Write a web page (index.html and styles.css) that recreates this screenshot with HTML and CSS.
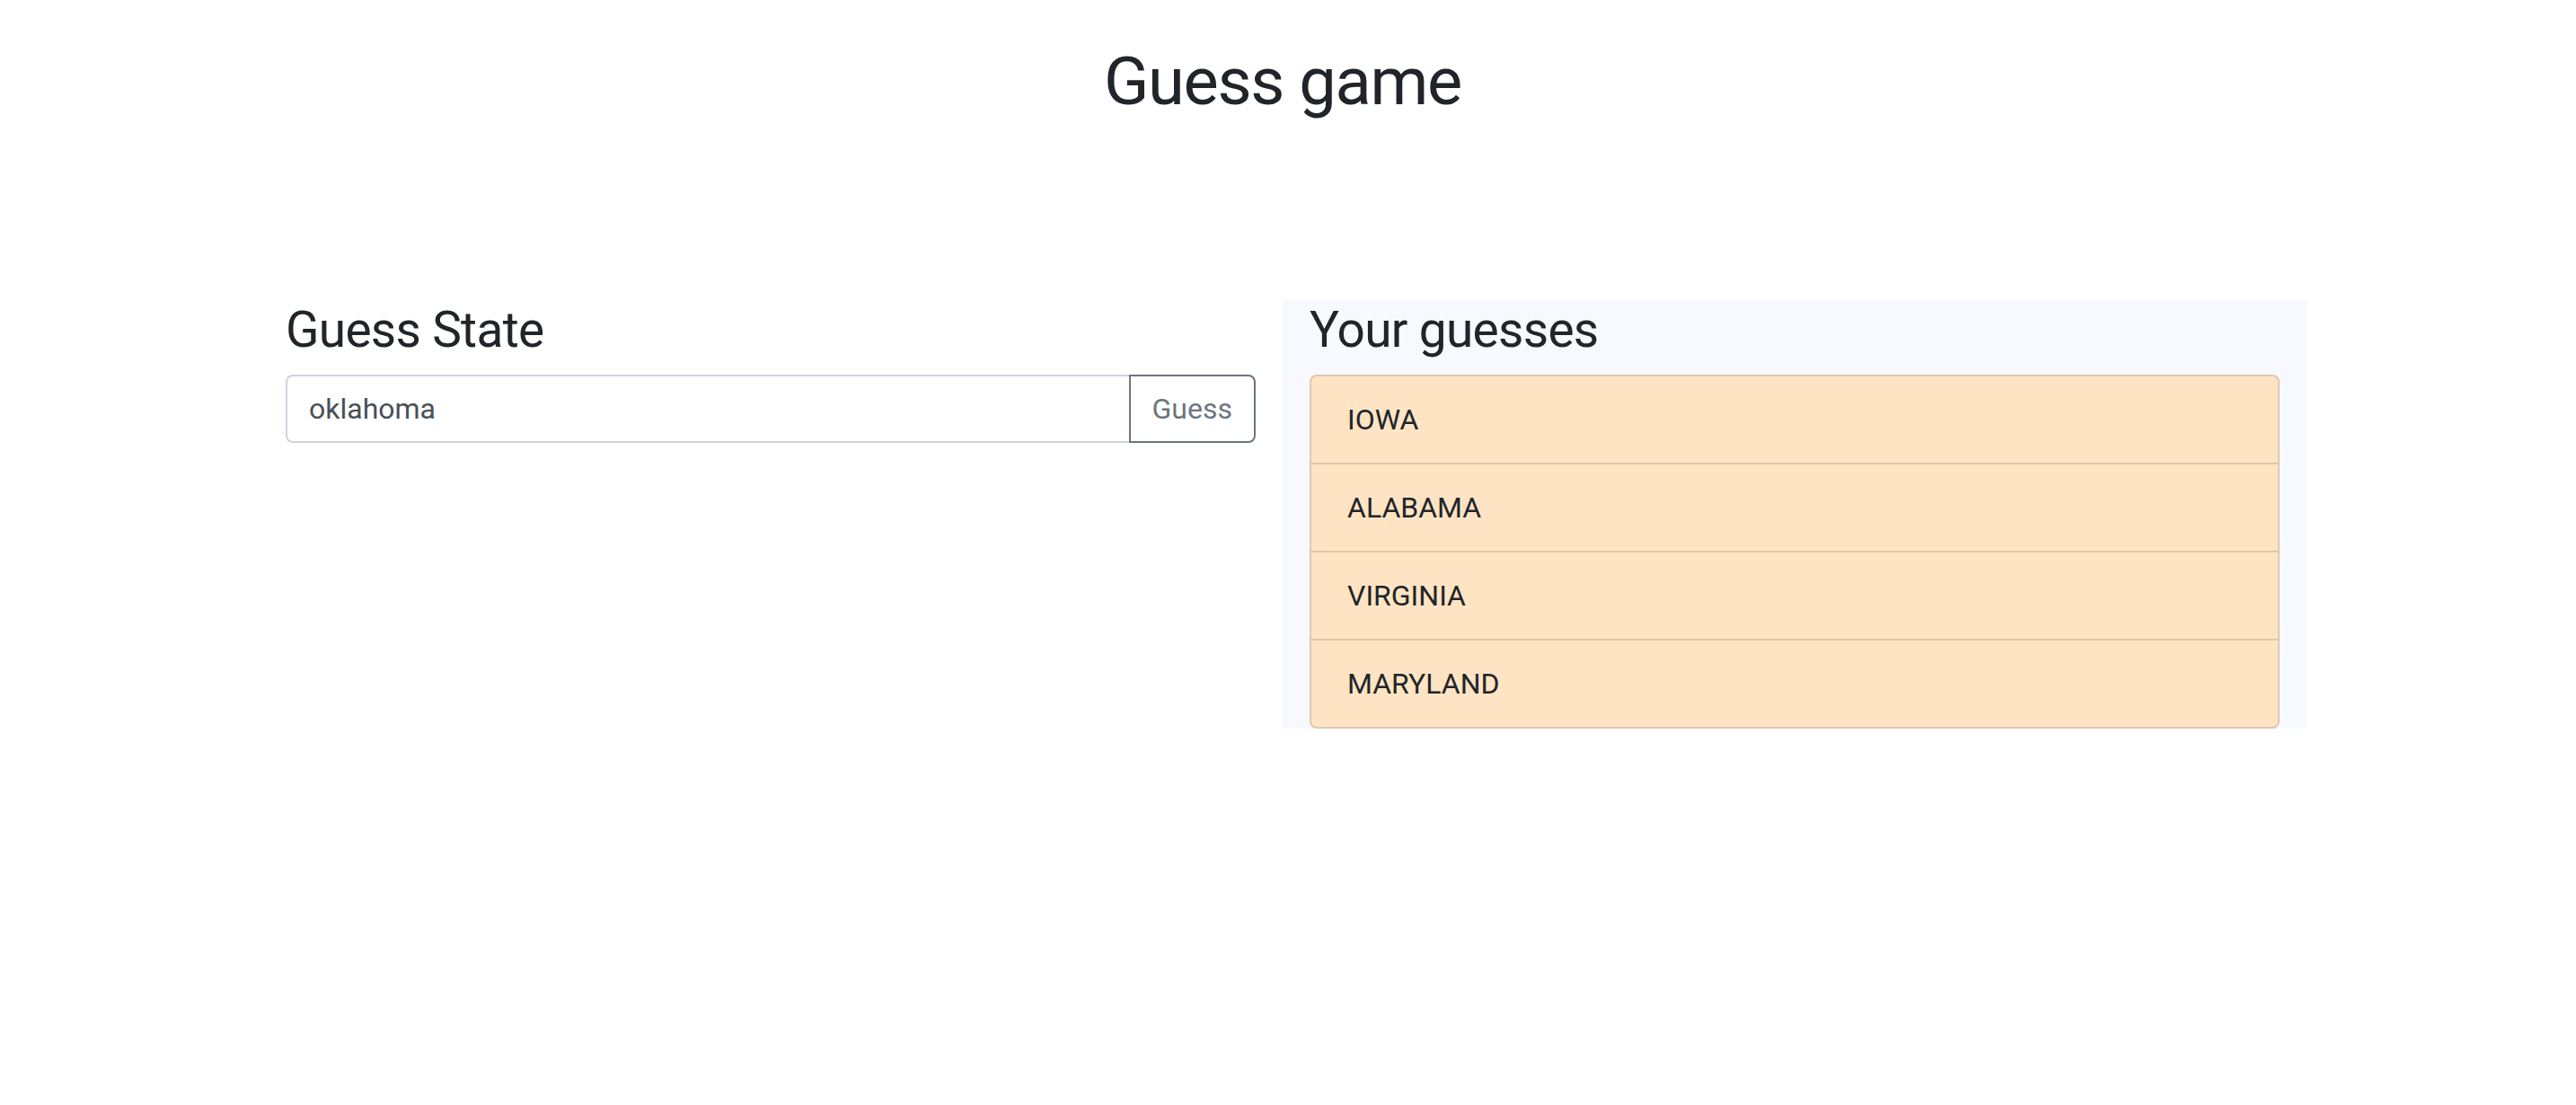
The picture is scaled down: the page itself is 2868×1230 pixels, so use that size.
FILE: index.html
```html
<!DOCTYPE html>
<html lang="en">
<head>
<meta charset="utf-8">
<title>Guess game</title>
<link rel="stylesheet" href="styles.css">
</head>
<body>
<div class="page">
  <h1 class="title">Guess game</h1>
  <div class="row">
    <section class="col">
      <h3 class="heading">Guess State</h3>
      <form class="input-group">
        <input class="field" type="text" value="oklahoma">
        <button class="btn" type="button">Guess</button>
      </form>
    </section>
    <section class="col col-panel">
      <h3 class="heading">Your guesses</h3>
      <ul class="list">
        <li class="item">IOWA</li>
        <li class="item">ALABAMA</li>
        <li class="item">VIRGINIA</li>
        <li class="item">MARYLAND</li>
      </ul>
    </section>
  </div>
</div>
</body>
</html>
```

FILE: styles.css
```css
html, body {
  margin: 0;
  padding: 0;
  background: #fff;
}
body {
  padding-right: 12px;
  font-family: Roboto, "Liberation Sans", Arial, sans-serif;
  color: #212529;
}
.page {
  width: 2280px;
  margin: 0 auto;
}
.title {
  margin: 0;
  padding-top: 47px;
  font-size: 74px;
  font-weight: 400;
  line-height: 1.2;
  letter-spacing: -1.3px;
  text-align: center;
}
.row {
  display: grid;
  grid-template-columns: 1fr 1fr;
  margin-top: 198px;
  align-items: start;
}
.col {
  padding: 0 30px;
}
.col-panel {
  background: #f8f8ff;
}
.heading {
  margin: 0 0 16px;
  font-size: 55px;
  font-weight: 400;
  line-height: 67px;
  letter-spacing: -0.7px;
}
.input-group {
  display: flex;
  margin: 0;
}
.field {
  flex: 1;
  min-width: 0;
  height: 76px;
  box-sizing: border-box;
  margin: 0;
  padding: 12px 24px;
  border: 2px solid #ced4da;
  border-right: none;
  border-radius: 8px 0 0 8px;
  font-family: inherit;
  font-size: 32px;
  color: #495057;
  background: #fff;
  outline: none;
}
.btn {
  height: 76px;
  box-sizing: border-box;
  margin: 0;
  padding: 12px 24px;
  border: 2px solid #6c757d;
  border-radius: 0 8px 8px 0;
  background: #fff;
  font-family: inherit;
  font-size: 32px;
  color: #6c757d;
  cursor: pointer;
}
.list {
  list-style: none;
  margin: 0;
  padding: 0;
  border: 2px solid #dfc8ac;
  border-radius: 8px;
  overflow: hidden;
  background: #ffe4c4;
}
.item {
  padding: 24px 40px;
  font-size: 32px;
  line-height: 48px;
  border-top: 2px solid #dfc8ac;
}
.item:first-child {
  border-top: none;
}
```
